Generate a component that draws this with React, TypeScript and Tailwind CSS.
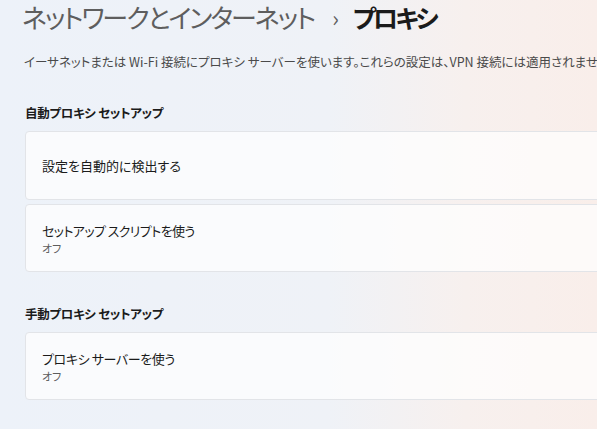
export default function App() {
  const font = "font-['Noto_Sans_CJK_JP','Noto_Sans',sans-serif] [font-feature-settings:'palt']";
  return (
    <div className={`w-[597px] h-[429px] overflow-hidden bg-[linear-gradient(90deg,#edf2f9_0%,#eff2f7_55%,#f7f0ee_78%,#f9eeea_100%)] ${font}`}>
      <div className="pl-[22px] h-[34px] flex items-center whitespace-nowrap">
        <span className="text-[26px] text-[#5e5e5e] leading-[34px] tracking-[-2px]">ネットワークとインターネット</span>
        <span className="ml-[18px] text-[22px] text-[#5e5e5e] leading-[34px]">›</span>
        <span className="ml-[14px] text-[25px] text-[#1b1b1b] font-semibold leading-[34px] tracking-[-3px]">プロキシ</span>
      </div>
      <div className="pl-[24px] mt-[19px] h-[18px] flex items-center whitespace-nowrap text-[12.5px] text-[#4a4a4a]">
        イーサネットまたは Wi-Fi 接続にプロキシ サーバーを使います。これらの設定は、VPN 接続には適用されません。
      </div>
      <div className="pl-[25px] mt-[33px] h-[18px] flex items-center text-[12.5px] font-semibold text-[#1b1b1b] whitespace-nowrap tracking-[-0.3px]">
        自動プロキシ セットアップ
      </div>
      <div className="pl-[25px] mt-[9px] flex flex-col gap-[4px]">
        <div className="mr-[-20px] h-[69px] rounded-[4px] border border-[#e2e4e8] bg-white/70 flex items-center pl-[16px] text-[13px] text-[#1b1b1b] whitespace-nowrap">
          設定を自動的に検出する
        </div>
        <div className="mr-[-20px] h-[68px] rounded-[4px] border border-[#e2e4e8] bg-white/70 flex flex-col justify-center pl-[16px] whitespace-nowrap">
          <div className="text-[13px] text-[#1b1b1b] leading-[19px] tracking-[-0.6px]">セットアップ スクリプトを使う</div>
          <div className="text-[11px] text-[#5d5d5d] leading-[16px]">オフ</div>
        </div>
      </div>
      <div className="pl-[25px] mt-[33px] h-[18px] flex items-center text-[12.5px] font-semibold text-[#1b1b1b] whitespace-nowrap tracking-[-0.3px]">
        手動プロキシ セットアップ
      </div>
      <div className="pl-[25px] mt-[9px]">
        <div className="mr-[-20px] h-[68px] rounded-[4px] border border-[#e2e4e8] bg-white/70 flex flex-col justify-center pl-[16px] whitespace-nowrap">
          <div className="text-[13px] text-[#1b1b1b] leading-[19px] tracking-[-0.4px]">プロキシ サーバーを使う</div>
          <div className="text-[11px] text-[#5d5d5d] leading-[16px]">オフ</div>
        </div>
      </div>
    </div>
  );
}
